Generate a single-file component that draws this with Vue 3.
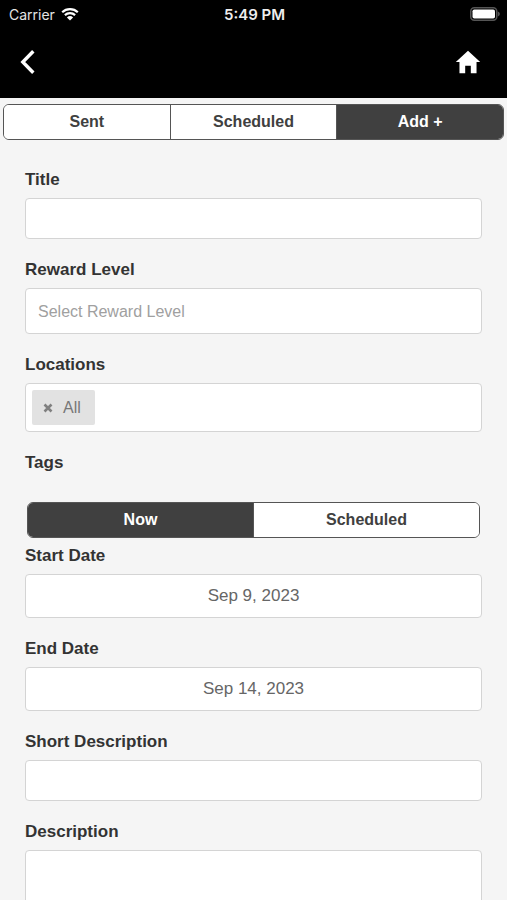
<script setup>
import { ref } from 'vue'

const tabs = ['Sent', 'Scheduled', 'Add +']
const activeTab = ref('Add +')

const timings = ['Now', 'Scheduled']
const timing = ref('Now')

const title = ref('')
const rewardLevel = ref('')
const locations = ref(['All'])
const startDate = ref('Sep 9, 2023')
const endDate = ref('Sep 14, 2023')
const shortDescription = ref('')
const description = ref('')

function removeLocation(name) {
  locations.value = locations.value.filter((item) => item !== name)
}
</script>

<template>
  <div class="screen">
    <header class="header">
      <div class="status">
        <div class="carrier">
          <span>Carrier</span>
          <svg class="wifi" viewBox="0 0 18 14" aria-hidden="true">
            <path d="M1.2 5.2a11.2 11.2 0 0 1 15.6 0" />
            <path d="M3.9 8.1a7.4 7.4 0 0 1 10.2 0" />
            <path class="solid" d="M9 13.6 5.9 10.5a4.5 4.5 0 0 1 6.2 0z" />
          </svg>
        </div>
        <span class="time">5:49 PM</span>
        <svg class="battery" viewBox="0 0 30 14" aria-hidden="true">
          <rect class="shell" x="0.75" y="0.75" width="26" height="12.5" rx="3.5" />
          <rect class="charge" x="2.5" y="2.5" width="22.5" height="9" rx="1.8" />
          <path class="nub" d="M27.8 4.6c1.3.4 2 1.300 2 2.400s-.7 2-2 2.400z" />
        </svg>
      </div>
      <nav class="bar">
        <button class="icon-button" type="button" aria-label="Back">
          <svg class="chevron" viewBox="0 0 16 26" aria-hidden="true">
            <path d="M13.300 2.200 2.800 13l10.500 10.800" />
          </svg>
        </button>
        <button class="icon-button" type="button" aria-label="Home">
          <svg class="home" viewBox="0 0 512 512" aria-hidden="true">
            <path d="M208 448V320h96v128h97.600V256H464L256 64 48 256h62.400v192z" />
          </svg>
        </button>
      </nav>
    </header>

    <main class="content">
      <div class="segment tabs">
        <button
          v-for="tab in tabs"
          :key="tab"
          type="button"
          :class="{ active: tab === activeTab }"
          @click="activeTab = tab"
        >{{ tab }}</button>
      </div>

      <form class="form" @submit.prevent>
        <div class="field">
          <label for="title">Title</label>
          <input id="title" v-model="title" class="control" type="text" />
        </div>

        <div class="field">
          <label for="reward">Reward Level</label>
          <select id="reward" v-model="rewardLevel" class="control reward">
            <option value="" disabled>Select Reward Level</option>
          </select>
        </div>

        <div class="field">
          <label for="locations">Locations</label>
          <div class="control chips">
            <span v-for="name in locations" :key="name" class="chip">
              <button type="button" :aria-label="'Remove ' + name" @click="removeLocation(name)">
                <svg viewBox="0 0 10 10" aria-hidden="true">
                  <path d="M1.500 1.500l7 7M8.500 1.500l-7 7" />
                </svg>
              </button>
              {{ name }}
            </span>
            <input id="locations" class="chip-input" type="text" />
          </div>
        </div>

        <div class="timing">
          <span class="heading">Tags</span>
          <div class="segment">
            <button
              v-for="option in timings"
              :key="option"
              type="button"
              :class="{ active: option === timing }"
              @click="timing = option"
            >{{ option }}</button>
          </div>
        </div>

        <div class="field">
          <label for="start">Start Date</label>
          <input id="start" v-model="startDate" class="control date" type="text" readonly />
        </div>

        <div class="field">
          <label for="end">End Date</label>
          <input id="end" v-model="endDate" class="control date" type="text" readonly />
        </div>

        <div class="field">
          <label for="short">Short Description</label>
          <input id="short" v-model="shortDescription" class="control" type="text" />
        </div>

        <div class="field">
          <label for="description">Description</label>
          <textarea id="description" v-model="description" class="control area"></textarea>
        </div>
      </form>
    </main>
  </div>
</template>

<style>
body {
  background: #f5f5f5;
}
</style>

<style scoped>
.screen {
  display: flex;
  flex-direction: column;
  height: 100vh;
  background: #f5f5f5;
  color: #333;
  font-family: "Liberation Sans", Arial, sans-serif;
}

.screen *,
.screen {
  box-sizing: border-box;
}

button,
input,
select,
textarea {
  margin: 0;
  font-family: inherit;
}

.header {
  flex: none;
  background: #000;
  color: #fff;
}

.status {
  display: grid;
  grid-template-columns: 1fr auto 1fr;
  align-items: center;
  height: 28px;
  padding: 0 7px 0 9px;
  font-family: Inter, sans-serif;
  font-size: 14px;
}

.carrier {
  display: flex;
  align-items: center;
  gap: 6px;
  color: #e4e4e4;
}

.wifi {
  width: 18px;
  height: 14px;
  fill: none;
  stroke: #fff;
  stroke-width: 2.2;
}

.wifi .solid {
  fill: #fff;
  stroke: none;
}

.time {
  font-size: 15px;
  font-weight: 600;
  color: #eee;
}

.battery {
  justify-self: end;
  width: 30px;
  height: 14px;
}

.shell {
  fill: none;
  stroke: #555;
  stroke-width: 1.5;
}

.charge {
  fill: #fff;
}

.nub {
  fill: #555;
}

.bar {
  display: flex;
  align-items: center;
  justify-content: space-between;
  height: 70px;
  padding: 0 20px 2px;
}

.icon-button {
  display: flex;
  padding: 0;
  border: 0;
  background: none;
}

.chevron {
  width: 16px;
  height: 26px;
  fill: none;
  stroke: #fff;
  stroke-width: 3.4;
}

.home {
  width: 30px;
  height: 30px;
  margin-right: 4px;
  fill: #fff;
}

.content {
  flex: 1;
  min-height: 0;
  overflow-y: auto;
  scrollbar-width: none;
}

.segment {
  display: flex;
  height: 36px;
  overflow: hidden;
  border: 1px solid #555;
  border-radius: 6px;
  background: #fff;
}

.segment button {
  flex: 1;
  padding: 0;
  border: 0;
  background: #fff;
  color: #404040;
  font-size: 16px;
  font-weight: 700;
}

.segment button + button {
  border-left: 1px solid #555;
}

.segment .active {
  background: #404040;
  color: #fff;
}

.tabs {
  margin: 6px 3px 0;
}

.form {
  display: flex;
  flex-direction: column;
  padding: 30px 25px 20px;
}

.field {
  display: flex;
  flex-direction: column;
  gap: 8px;
  margin-bottom: 21px;
}

label,
.heading {
  font-size: 17px;
  font-weight: 700;
  line-height: 20px;
}

.control {
  width: 100%;
  height: 41px;
  padding: 0 12px;
  border: 1px solid #d4d4d4;
  border-radius: 4px;
  outline: 0;
  background: #fff;
  color: #666;
  font-size: 17px;
}

.reward {
  height: 46px;
  appearance: none;
  color: #a0a0a0;
  font-size: 16px;
}

.chips {
  display: flex;
  align-items: center;
  gap: 6px;
  height: 49px;
  padding: 0 6px;
}

.chip {
  display: flex;
  align-items: center;
  gap: 10px;
  height: 35px;
  padding: 0 14px 0 11px;
  border-radius: 2px;
  background: #e2e2e2;
  color: #777;
  font-size: 16px;
}

.chip button {
  display: flex;
  padding: 0;
  border: 0;
  background: none;
}

.chip svg {
  width: 10px;
  height: 10px;
  stroke: #808080;
  stroke-width: 2.6;
}

.chip-input {
  flex: 1;
  min-width: 0;
  border: 0;
  outline: 0;
  background: none;
  font-size: 16px;
}

.timing {
  display: flex;
  flex-direction: column;
  gap: 29px;
  margin-bottom: 8px;
}

.timing .segment {
  margin: 0 2px;
}

.date {
  height: 44px;
  text-align: center;
}

.area {
  height: 120px;
  padding: 12px;
  resize: none;
}
</style>
